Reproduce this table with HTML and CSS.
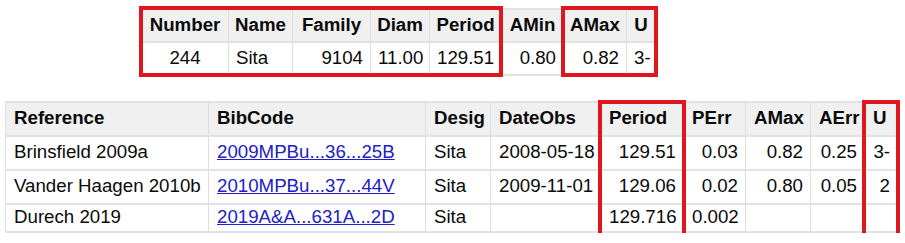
FILE: index.html
```html
<!DOCTYPE html>
<html>
<head>
<meta charset="utf-8">
<link rel="stylesheet" href="styles.css">
</head>
<body>
<div class="wrap wrap-top">
  <table class="grid grid-top">
    <colgroup>
      <col class="c87"><col class="c64"><col class="c78"><col class="c59"><col class="c72"><col class="c62"><col class="c63"><col class="c29">
    </colgroup>
    <thead>
      <tr><th>Number</th><th>Name</th><th>Family</th><th>Diam</th><th>Period</th><th>AMin</th><th>AMax</th><th>U</th></tr>
    </thead>
    <tbody>
      <tr><td class="c">244</td><td>Sita</td><td class="r">9104</td><td class="r">11.00</td><td class="r">129.51</td><td class="r">0.80</td><td class="r">0.82</td><td class="r">3-</td></tr>
    </tbody>
  </table>
  <span class="mark mark-t1"></span>
  <span class="mark mark-t2"></span>
</div>

<div class="wrap wrap-bottom">
  <table class="grid grid-bottom">
    <colgroup>
      <col class="c203"><col class="c217"><col class="c65"><col class="c110"><col class="c83"><col class="c62"><col class="c65"><col class="c54"><col class="c33">
    </colgroup>
    <thead>
      <tr><th>Reference</th><th>BibCode</th><th>Desig</th><th>DateObs</th><th>Period</th><th>PErr</th><th>AMax</th><th>AErr</th><th>U</th></tr>
    </thead>
    <tbody>
      <tr><td>Brinsfield 2009a</td><td><a href="#">2009MPBu...36...25B</a></td><td>Sita</td><td>2008-05-18</td><td class="r">129.51</td><td class="r">0.03</td><td class="r">0.82</td><td class="r">0.25</td><td class="r">3-</td></tr>
      <tr><td>Vander Haagen 2010b</td><td><a href="#">2010MPBu...37...44V</a></td><td>Sita</td><td>2009-11-01</td><td class="r">129.06</td><td class="r">0.02</td><td class="r">0.80</td><td class="r">0.05</td><td class="r">2</td></tr>
      <tr class="last"><td>Durech 2019</td><td><a href="#">2019A&amp;A...631A...2D</a></td><td>Sita</td><td></td><td class="r">129.716</td><td class="r">0.002</td><td class="r"></td><td class="r"></td><td class="r"></td></tr>
    </tbody>
  </table>
  <span class="mark mark-b1"></span>
  <span class="mark mark-b2"></span>
</div>
</body>
</html>
```
FILE: styles.css
```css
html, body {
  margin: 0;
  padding: 0;
  background: #ffffff;
}
body {
  font-family: "Liberation Sans", Arial, sans-serif;
  font-size: 18.7px;
  line-height: 21px;
  color: #0a0a0a;
}
.wrap {
  position: relative;
}
.wrap-top {
  margin: 8px 0 0 141px;
  width: 514px;
}
.wrap-bottom {
  margin: 25px 0 0 5px;
  width: 892px;
}
.grid {
  border-collapse: collapse;
  table-layout: fixed;
  width: 100%;
}
.grid th,
.grid td {
  border-left: 1px solid #dedede;
  border-right: 1px solid #dedede;
  border-top: 2px solid #e2e2e2;
  border-bottom: 2px solid #e2e2e2;
  padding: 4px 7px 6px;
  white-space: nowrap;
  overflow: hidden;
}
.grid th {
  background: #f0f0f0;
  font-weight: bold;
}
.grid-top th {
  text-align: center;
  padding-left: 2px;
  padding-right: 2px;
}
.grid-bottom th {
  text-align: left;
}
.grid-bottom th,
.grid-bottom td {
  padding: 4px 7px 7px 8px;
}
.grid-bottom tr.last td {
  padding: 1px 7px 4px 8px;
}
.grid td {
  text-align: left;
}
.grid td.r {
  text-align: right;
}
.grid td.c {
  text-align: center;
}
.grid a {
  color: #2020c8;
  text-decoration: underline;
}
.c87 { width: 87px; }
.c64 { width: 64px; }
.c78 { width: 78px; }
.c59 { width: 59px; }
.c72 { width: 72px; }
.c62 { width: 62px; }
.c63 { width: 63px; }
.c29 { width: 29px; }
.c203 { width: 203px; }
.c217 { width: 217px; }
.c65 { width: 65px; }
.c110 { width: 110px; }
.c83 { width: 83px; }
.c54 { width: 54px; }
.c33 { width: 33px; }

.mark {
  position: absolute;
  border: 4px solid #e0161e;
  box-sizing: border-box;
  pointer-events: none;
}
.mark-t1 {
  left: -2px;
  top: -2px;
  width: 364px;
  height: 71px;
}
.mark-t2 {
  left: 420px;
  top: -2px;
  width: 97px;
  height: 71px;
}
.mark-b1 {
  left: 593px;
  top: -1px;
  width: 88px;
  height: 138px;
}
.mark-b2 {
  left: 857px;
  top: -1px;
  width: 38px;
  height: 138px;
}
```
